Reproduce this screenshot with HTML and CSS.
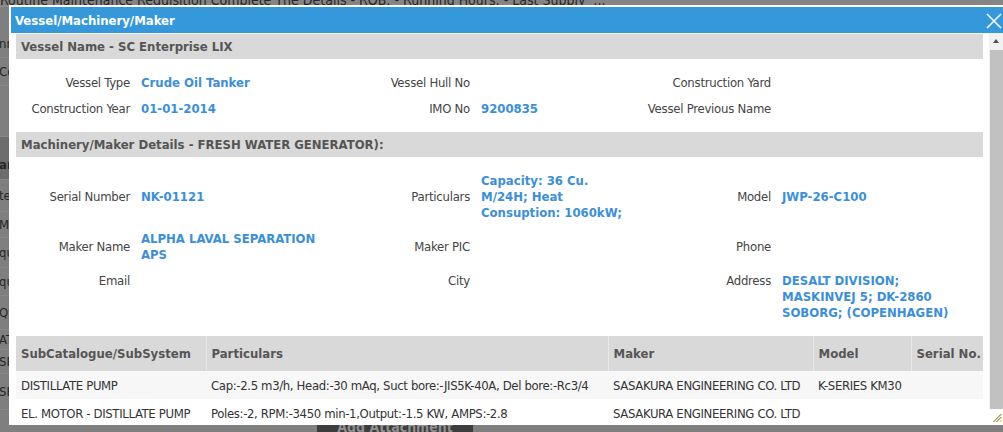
FILE: index.html
```html
<!DOCTYPE html>
<html lang="en">

<head>
    <meta charset="UTF-8">
    <meta name="viewport" content="width=device-width, initial-scale=1.0">
    <title>Routine Maintenance Requisition</title>
    <link rel="stylesheet" href="styles.css">
</head>

<body>
    <!-- page behind the dialog, dimmed -->
    <div class="page">
        <div class="page-title">Routine Maintenance Requisition Complete The Details - ROB: - Running Hours: - Last Supply &nbsp;...</div>
        <div class="page-rows">
            <div class="page-row r1">nning</div>
            <div class="page-row r2">Comments</div>
            <div class="page-row blank"></div>
            <div class="page-row head">ar</div>
            <div class="page-row r3">tem</div>
            <div class="page-row r4">Maker</div>
            <div class="page-row r5">quired</div>
            <div class="page-row r6">quested</div>
            <div class="page-row r7">Qty</div>
            <div class="page-row r8">ATTACH</div>
            <div class="page-row r9">SELECT</div>
            <div class="page-row r10">SELECT</div>
        </div>
        <button class="page-btn">Add Attachment</button>
    </div>

    <div class="modal">
        <div class="modal-title">
            <span>Vessel/Machinery/Maker</span>
            <button class="close-btn" aria-label="Close">
                <svg width="16" height="16" viewBox="0 0 16 16">
                    <path d="M1 1 L15 15 M15 1 L1 15" stroke="#fff" stroke-width="1.5" fill="none"/>
                </svg>
            </button>
        </div>

        <div class="modal-body">
            <div class="modal-content">
                <div class="section-head">Vessel Name - SC Enterprise LIX</div>
                <div class="info-grid">
                    <div class="lbl">Vessel Type</div>
                    <div class="val">Crude Oil Tanker</div>
                    <div class="lbl">Vessel Hull No</div>
                    <div class="val"></div>
                    <div class="lbl">Construction Yard</div>
                    <div class="val"></div>

                    <div class="lbl">Construction Year</div>
                    <div class="val">01-01-2014</div>
                    <div class="lbl">IMO No</div>
                    <div class="val">9200835</div>
                    <div class="lbl">Vessel Previous Name</div>
                    <div class="val"></div>
                </div>

                <div class="section-head">Machinery/Maker Details - FRESH WATER GENERATOR):</div>
                <div class="info-grid">
                    <div class="lbl">Serial Number</div>
                    <div class="val">NK-01121</div>
                    <div class="lbl">Particulars</div>
                    <div class="val">Capacity: 36 Cu. M/24H; Heat Consuption: 1060kW;</div>
                    <div class="lbl">Model</div>
                    <div class="val">JWP-26-C100</div>

                    <div class="lbl">Maker Name</div>
                    <div class="val">ALPHA LAVAL SEPARATION APS</div>
                    <div class="lbl">Maker PIC</div>
                    <div class="val"></div>
                    <div class="lbl">Phone</div>
                    <div class="val"></div>

                    <div class="lbl top">Email</div>
                    <div class="val top"></div>
                    <div class="lbl top">City</div>
                    <div class="val top"></div>
                    <div class="lbl top">Address</div>
                    <div class="val top">DESALT DIVISION; MASKINVEJ 5; DK-2860 SOBORG; (COPENHAGEN)</div>
                </div>

                <table class="sub-table">
                    <colgroup>
                        <col style="width: 190px">
                        <col style="width: 402px">
                        <col style="width: 205px">
                        <col style="width: 98px">
                        <col>
                    </colgroup>
                    <thead>
                        <tr>
                            <th>SubCatalogue/SubSystem</th>
                            <th>Particulars</th>
                            <th>Maker</th>
                            <th>Model</th>
                            <th>Serial No.</th>
                        </tr>
                    </thead>
                    <tbody>
                        <tr>
                            <td>DISTILLATE PUMP</td>
                            <td>Cap:-2.5 m3/h, Head:-30 mAq, Suct bore:-JIS5K-40A, Del bore:-Rc3/4</td>
                            <td>SASAKURA ENGINEERING CO. LTD</td>
                            <td>K-SERIES KM30</td>
                            <td></td>
                        </tr>
                        <tr>
                            <td>EL. MOTOR - DISTILLATE PUMP</td>
                            <td>Poles:-2, RPM:-3450 min-1,Output:-1.5 KW, AMPS:-2.8</td>
                            <td>SASAKURA ENGINEERING CO. LTD</td>
                            <td></td>
                            <td></td>
                        </tr>
                    </tbody>
                </table>
            </div>

            <div class="scrollbar">
                <div class="scroll-up"></div>
                <div class="scroll-thumb"></div>
                <div class="scroll-grip">
                    <svg width="12" height="12" viewBox="0 0 12 12">
                        <path d="M11 3 L3 11 M11 6 L6 11 M11 9 L9 11" stroke="#e8c34a" stroke-width="1" fill="none"/>
                        <path d="M10 3 L2 11 M10 6 L5 11" stroke="#999" stroke-width="1" fill="none"/>
                    </svg>
                </div>
            </div>
        </div>
    </div>
</body>

</html>
```

FILE: styles.css
```css
body {
    margin: 0;
    padding: 0;
    background: #7f7f7f;
    font-family: "DejaVu Sans Condensed", "DejaVu Sans", sans-serif;
    font-size: 13px;
    color: #444;
    overflow: hidden;
    height: 432px;
}

/* dimmed page behind */
.page {
    color: #262626;
}

.page-title {
    margin-top: -8px;
    height: 14px;
    font-size: 14px;
    white-space: nowrap;
    background: #858585;
    border-bottom: 1px solid #909090;
}

.page-rows {
    margin-top: 23px;
    width: 9px;
    overflow: hidden;
}

.page-row {
    white-space: nowrap;
    overflow: hidden;
    margin-left: -1px;
    border-bottom: 1px solid #888;
    box-sizing: border-box;
}

.r1 { height: 28px; line-height: 28px; }
.r2 { height: 28px; line-height: 28px; }
.blank { height: 51px; }
.head { height: 43px; line-height: 56px; background: #6d6d6d; font-weight: bold; }
.r3 { height: 32px; line-height: 32px; }
.r4 { height: 26px; line-height: 26px; }
.r5 { height: 30px; line-height: 30px; }
.r6 { height: 28px; line-height: 28px; }
.r7 { height: 34px; line-height: 34px; }
.r8 { height: 20px; line-height: 20px; }
.r9 { height: 24px; line-height: 24px; }
.r10 { height: 36px; line-height: 36px; }

.page-btn {
    position: absolute;
    left: 317px;
    top: 412px;
    width: 156px;
    height: 30px;
    border: none;
    background: #3d3d3d;
    color: #8f8f8f;
    font-family: inherit;
    font-size: 14px;
    font-weight: bold;
}

/* dialog */
.modal {
    position: absolute;
    left: 9px;
    top: 5px;
    right: -2px;
    height: 416px;
    background: #fff;
    border: 1px solid #fff;
    padding: 1px;
    display: flex;
    flex-direction: column;
    overflow: hidden;
}

.modal-title {
    height: 26px;
    background: #3498db;
    color: #fff;
    font-weight: bold;
    display: flex;
    align-items: center;
    justify-content: space-between;
    padding-left: 4px;
    flex-shrink: 0;
}

.close-btn {
    background: none;
    border: none;
    padding: 0;
    margin-right: 1px;
    margin-top: 1px;
    width: 16px;
    height: 16px;
    display: flex;
}

.modal-body {
    flex: 1;
    display: flex;
    min-height: 0;
}

.modal-content {
    flex: 1;
    padding: 1px 6px 0 5px;
    overflow: hidden;
}

.section-head {
    background: #d9d9d9;
    color: #555;
    font-weight: bold;
    height: 25px;
    line-height: 26px;
    padding-left: 5px;
}

.info-grid {
    display: grid;
    grid-template-columns: 114px 217px 123px 172px 129px 1fr;
    align-items: center;
    padding: 11px 0 10px;
    line-height: 16px;
}

.info-grid > div {
    padding: 5px 0;
}

.lbl {
    text-align: right;
    letter-spacing: -0.25px;
}

.val {
    color: #3b8fd9;
    font-weight: bold;
    padding-left: 11px !important;
    padding-right: 16px !important;
}

.info-grid > .top {
    align-self: start;
}

.sub-table {
    width: 100%;
    border-collapse: collapse;
    table-layout: fixed;
}

.sub-table th {
    background: #d9d9d9;
    color: #555;
    text-align: left;
    height: 35px;
    padding: 0 5px;
    white-space: nowrap;
    border-left: 1px solid #e8e8e8;
}

.sub-table th:first-child {
    border-left: none;
}

.sub-table td {
    height: 28px;
    padding: 0 5px;
    color: #333;
    letter-spacing: -0.35px;
    white-space: nowrap;
    overflow: hidden;
}

.sub-table tbody tr:nth-child(odd) {
    background: #f7f7f7;
}

/* fake scrollbar */
.scrollbar {
    width: 14px;
    background: #f1f1f1;
    display: flex;
    flex-direction: column;
    flex-shrink: 0;
}

.scroll-up {
    height: 17px;
    position: relative;
}

.scroll-up::after {
    content: "";
    position: absolute;
    left: 4px;
    top: 6px;
    border-left: 3px solid transparent;
    border-right: 3px solid transparent;
    border-bottom: 4px solid #505050;
}

.scroll-thumb {
    flex: 1;
    background: #c1c1c1;
    margin-left: 1px;
}

.scroll-grip {
    height: 14px;
    background: #fff;
    display: flex;
    justify-content: flex-end;
    align-items: flex-end;
}
```
